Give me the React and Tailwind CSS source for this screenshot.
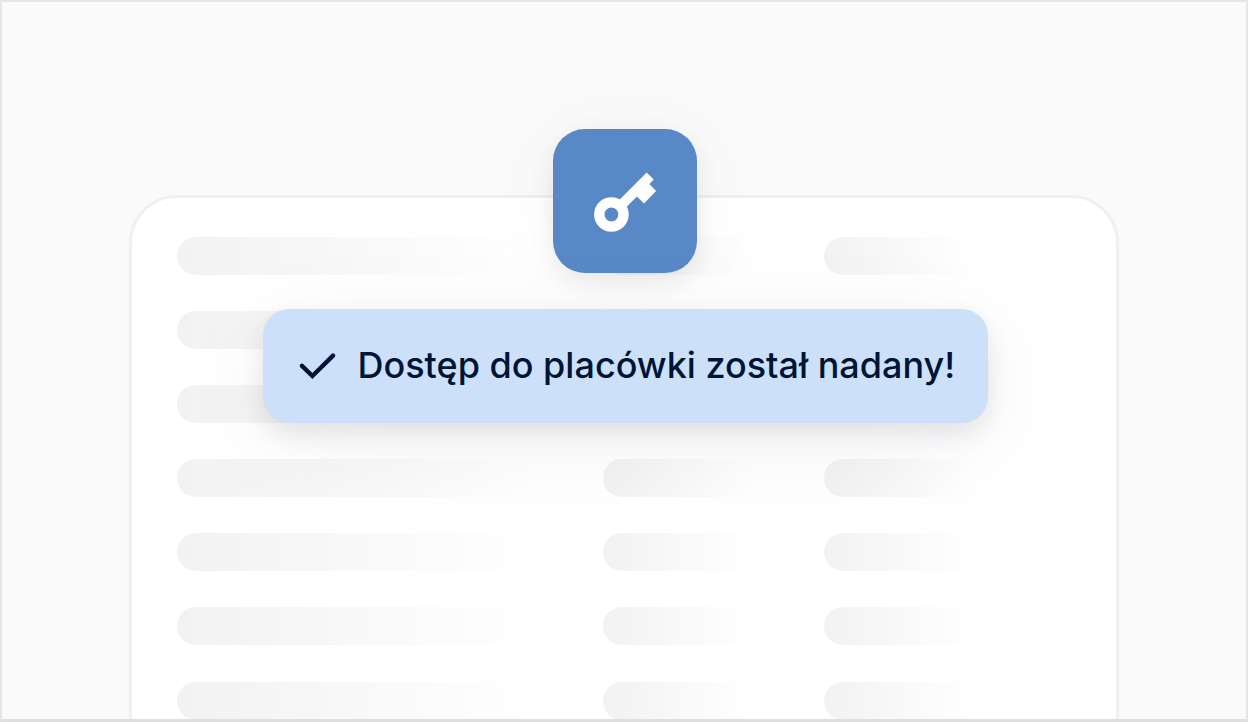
const rows = [0, 1, 2, 3, 4, 5, 6];

function PlaceholderRow() {
  return (
    <div className="flex h-[38px] shrink-0">
      <div className="mr-[71px] w-[355px] rounded-l-full bg-linear-to-r from-[#f2f2f2] to-white" />
      <div className="mr-[73px] w-[148px] rounded-l-full bg-linear-to-r from-[#f2f2f2] to-white" />
      <div className="w-[148px] rounded-l-full bg-linear-to-r from-[#f2f2f2] to-white" />
    </div>
  );
}

function KeyIcon() {
  return (
    <svg className="size-36" viewBox="553 129 144 144" fill="none">
      <circle cx="611.4" cy="214.5" r="12.1" stroke="white" strokeWidth="10.4" />
      <path
        d="M646.6 172.5L653.8 179.6L649.4 184L656.1 190.9L644 203.5L636.9 196.5L625.5 208L618.3 201Z"
        fill="white"
      />
    </svg>
  );
}

function CheckIcon() {
  return (
    <svg className="h-[30px] w-[38px] shrink-0" viewBox="299 351 38 30" fill="none">
      <path
        d="M302 365.9L312.4 376L333 355.6"
        stroke="#001533"
        strokeWidth="4.4"
        strokeLinecap="round"
      />
    </svg>
  );
}

export default function App() {
  return (
    <div className="relative h-[722px] w-[1248px] overflow-hidden border-x-2 border-t-2 border-b-[3px] border-x-[#e6e6e6] border-t-[#e6e6e6] border-b-[#dfdfdf] bg-[#fafafa] font-['Inter',sans-serif]">
      <div className="mx-auto mt-[193px] flex h-[620px] w-[990px] flex-col gap-[36.1px] rounded-[48px] border-[3px] border-[#f0f0f0] bg-white pt-[39px] pl-[45px]">
        {rows.map((row) => (
          <PlaceholderRow key={row} />
        ))}
      </div>

      <div className="absolute inset-x-0 top-[127px] flex flex-col items-center gap-9 pl-[2px]">
        <div className="size-36 rounded-[32px] bg-[#5889c6] shadow-[0_8px_24px_rgba(0,0,0,0.08),0_8px_90px_rgba(30,30,80,0.03)]">
          <KeyIcon />
        </div>
        <div className="flex h-[114px] w-[725px] items-center rounded-[26px] bg-[#cce0f9] pl-[36px] shadow-[0_10px_24px_rgba(0,0,0,0.09),0_20px_100px_rgba(30,30,80,0.06)]">
          <CheckIcon />
          <span className="mb-[2px] ml-[21px] text-[36px] leading-[44px] font-medium whitespace-nowrap text-[#001533]">
            Dostęp do placówki został nadany!
          </span>
        </div>
      </div>
    </div>
  );
}
